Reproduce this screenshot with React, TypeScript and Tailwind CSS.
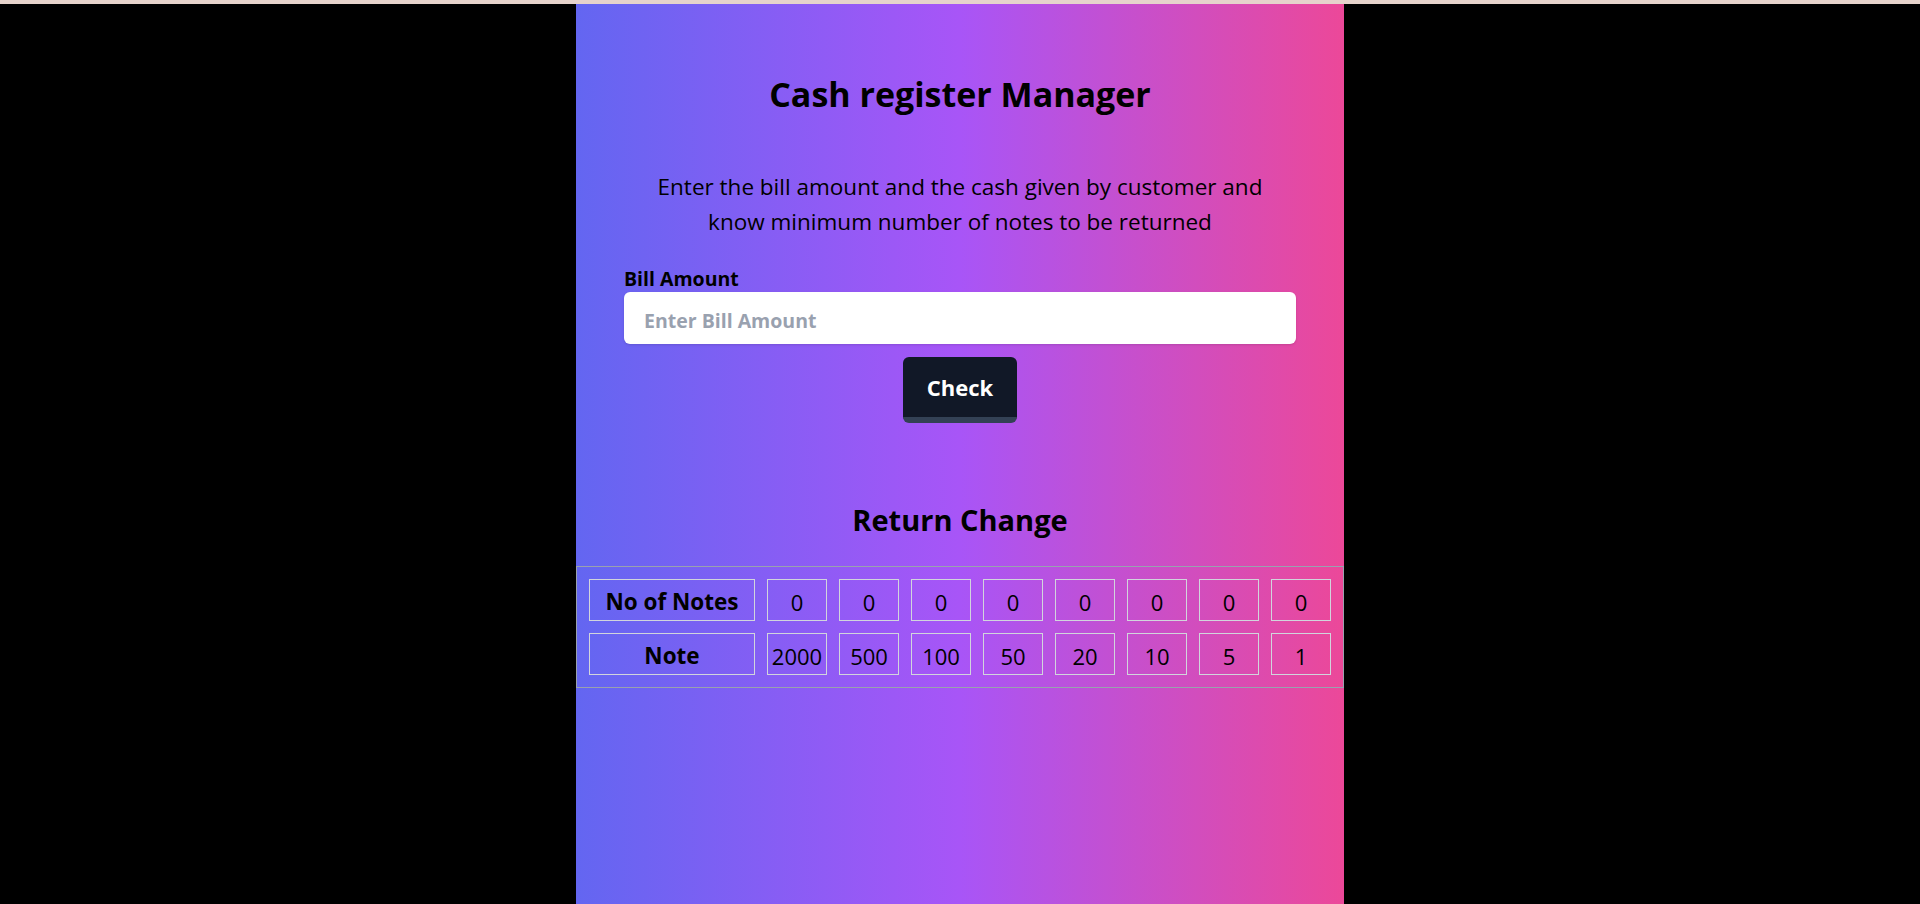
import React, { useState } from 'react';

const notes = [2000, 500, 100, 50, 20, 10, 5, 1];

export default function App() {
  const [bill, setBill] = useState('');
  const [counts] = useState<number[]>(notes.map(() => 0));

  return (
    <div className="min-h-screen bg-black font-['Open_Sans',sans-serif] text-black">
      {/* thin strip at the very top */}
      <div className="h-1 bg-[#e6d3cc]" />

      <main className="mx-auto flex min-h-[900px] max-w-3xl flex-col items-center bg-linear-to-r/srgb from-[#6366f1] via-[#a855f7] to-[#ec4899] pt-[70px]">
        <h1 className="text-[34px] leading-[40px] font-bold">Cash register Manager</h1>

        <p className="mt-[55px] max-w-[640px] text-center text-[22.5px] leading-[35px]">
          Enter the bill amount and the cash given by customer and know minimum number of notes to be returned
        </p>

        <form
          className="mt-[28px] flex w-full max-w-2xl flex-col items-center"
          onSubmit={(e) => e.preventDefault()}
        >
          <label htmlFor="bill" className="self-start text-[19.5px] leading-6 font-bold">
            Bill Amount
          </label>
          <input
            id="bill"
            type="number"
            value={bill}
            onChange={(e) => setBill(e.target.value)}
            placeholder="Enter Bill Amount"
            className="mt-px h-[52px] w-full rounded-md bg-white px-5 pt-1 text-[19.5px] font-bold shadow-sm placeholder:text-gray-400 focus:outline-none"
          />
          <button
            type="submit"
            className="mt-[13px] rounded-md border-b-[6px] border-[#334155] bg-[#111827] px-6 py-[14px] text-[22px] leading-8 font-bold text-white"
          >
            Check
          </button>
        </form>

        <h2 className="mt-[79px] text-[29px] leading-9 font-bold">Return Change</h2>

        {/* change table */}
        <div className="mt-[28px] grid w-full grid-cols-[166px_repeat(8,60px)] gap-3 border border-gray-400 p-3 text-[22px]">
          <div className="flex h-[42px] items-center justify-center border border-gray-300 pt-1 text-[22.5px] font-bold">No of Notes</div>
          {counts.map((c, i) => (
            <div key={'c' + i} className="flex h-[42px] items-center justify-center border border-gray-300 pt-1">
              {c}
            </div>
          ))}
          <div className="flex h-[42px] items-center justify-center border border-gray-300 pt-1 text-[22.5px] font-bold">Note</div>
          {notes.map((n) => (
            <div key={n} className="flex h-[42px] items-center justify-center border border-gray-300 pt-1">
              {n}
            </div>
          ))}
        </div>
      </main>
    </div>
  );
}
